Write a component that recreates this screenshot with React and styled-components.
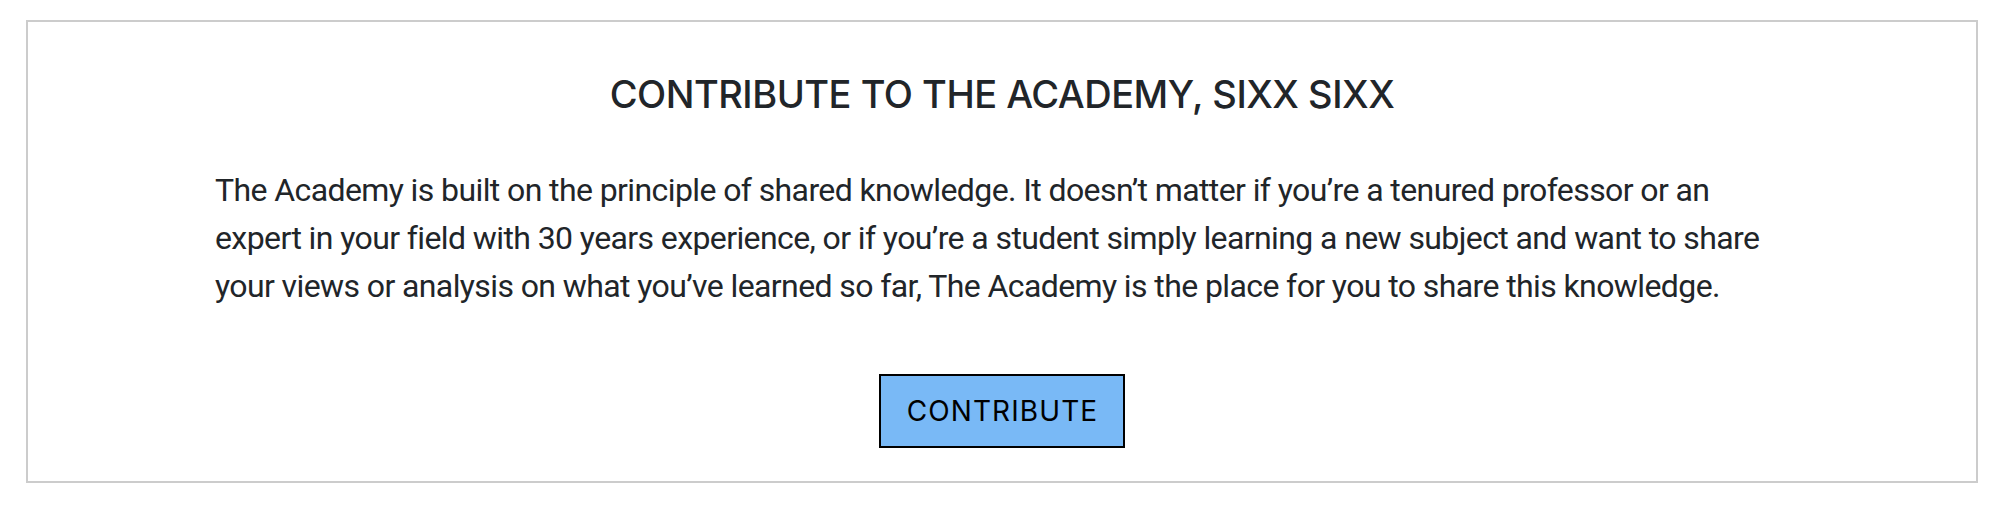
import React from "react";
import styled, { createGlobalStyle } from "styled-components";

const GlobalStyle = createGlobalStyle`
  html, body {
    margin: 0;
    padding: 0;
    background: #ffffff;
  }
  body {
    font-family: Roboto, "Noto Sans", "Liberation Sans", sans-serif;
    color: #212529;
  }
`;

const Page = styled.div`
  padding: 20px 26px 0 26px;
`;

const Card = styled.section`
  border: 2px solid #cccccc;
  padding: 50px 24px 33px 24px;
  display: flex;
  flex-direction: column;
  align-items: center;
`;

const Heading = styled.h2`
  margin: 0;
  font-family: Inter, "Noto Sans", "Liberation Sans", sans-serif;
  font-size: 38px;
  line-height: 1.2;
  font-weight: 500;
  letter-spacing: -0.5px;
  color: #212529;
  text-align: center;
`;

const Lead = styled.p`
  margin: 48px 0 0 0;
  box-sizing: border-box;
  width: 1574px;
  max-width: 100%;
  padding-right: 14px;
  font-family: Roboto, "Noto Sans", "Liberation Sans", sans-serif;
  font-size: 32px;
  line-height: 48px;
  font-weight: 400;
  letter-spacing: -0.6px;
  color: #212529;
  text-align: left;
`;

const ActionRow = styled.div`
  display: flex;
  justify-content: center;
  margin-top: 64px;
`;

const Button = styled.button`
  font-family: Inter, "Noto Sans", "Liberation Sans", sans-serif;
  font-size: 28px;
  line-height: 42px;
  font-weight: 400;
  letter-spacing: 1.1px;
  color: #000000;
  background: #79b9f6;
  border: 2px solid #000000;
  border-radius: 0;
  padding: 14px 25px 14px 26px;
  cursor: pointer;
`;

export default function App() {
  return (
    <>
      <GlobalStyle />
      <Page>
        <Card>
          <Heading>CONTRIBUTE TO THE ACADEMY, SIXX SIXX</Heading>
          <Lead>
            The Academy is built on the principle of shared knowledge. It doesn’t matter if you’re a tenured professor or an expert in your field with 30 years experience, or if you’re a student simply learning a new subject and want to share your views or analysis on what you’ve learned so far, The Academy is the place for you to share this knowledge.
          </Lead>
          <ActionRow>
            <Button type="button">CONTRIBUTE</Button>
          </ActionRow>
        </Card>
      </Page>
    </>
  );
}
